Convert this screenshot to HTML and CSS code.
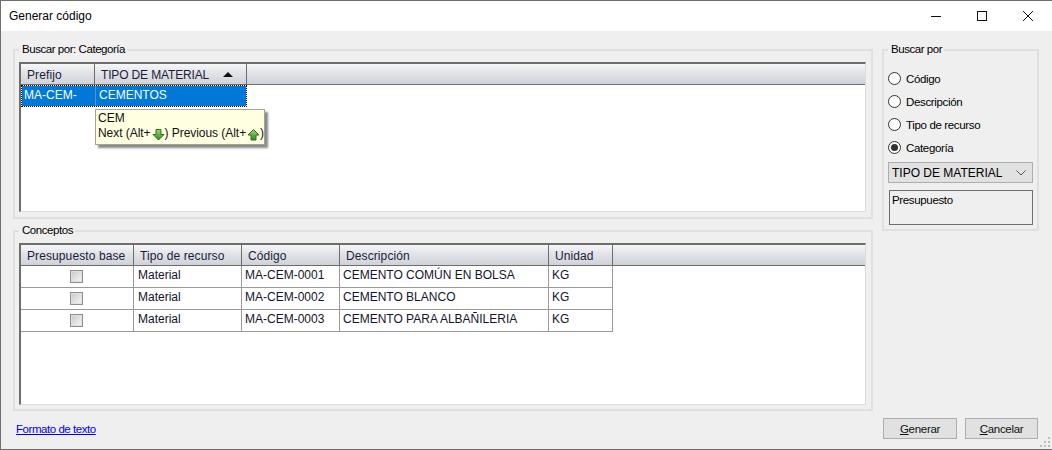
FILE: index.html
```html
<!DOCTYPE html>
<html lang="es">
<head>
<meta charset="utf-8">
<title>Generar código</title>
<link rel="stylesheet" href="styles.css">
</head>
<body>
<div class="window">
  <header class="titlebar">
    <span class="title">Generar código</span>
    <div class="controls">
      <svg class="ctl" width="46" height="30" viewBox="0 0 46 30"><path d="M18 15.500h10" stroke="#111" fill="none"/></svg>
      <svg class="ctl" width="46" height="30" viewBox="0 0 46 30"><rect x="18.500" y="10.500" width="9" height="9" stroke="#111" fill="none"/></svg>
      <svg class="ctl" width="46" height="30" viewBox="0 0 46 30"><path d="M18 10l10 10M28 10l-10 10" stroke="#111" fill="none"/></svg>
    </div>
  </header>
  <main class="content">
    <div class="left">
      <fieldset class="group group-top">
        <legend>Buscar por: Categoría</legend>
        <div class="grid grid-top">
          <div class="ghead">
            <div class="hcell w-prefijo">Prefijo</div>
            <div class="hcell w-tipo tight">TIPO DE MATERIAL<span class="sort"></span></div>
            <div class="hfill"></div>
          </div>
          <div class="selrow">
            <div class="selcell w-prefijo">MA-CEM-</div>
            <div class="selcell w-tipo">CEMENTOS</div>
          </div>
          <div class="tooltip">
            <div>CEM</div>
            <div class="tipline">Next (Alt+<svg width="13" height="13" viewBox="0 0 13 13"><defs><linearGradient id="gd" x1="0" y1="0" x2="0" y2="1"><stop offset="0" stop-color="#9fd67e"/><stop offset="1" stop-color="#2f8a1e"/></linearGradient></defs><path d="M4 1.500h5v5h3l-5.500 5.500L1 6.500h3z" fill="url(#gd)" stroke="#2f6f1c"/></svg>) Previous (Alt+<svg width="13" height="13" viewBox="0 0 13 13"><path d="M4 12h5V7h3L6.500 1.500 1 7h3z" fill="url(#gd)" stroke="#2f6f1c"/></svg>)</div>
          </div>
        </div>
      </fieldset>
      <fieldset class="group group-bottom">
        <legend>Conceptos</legend>
        <div class="grid grid-bottom">
          <div class="ghead">
            <div class="hcell c1">Presupuesto base</div>
            <div class="hcell c2">Tipo de recurso</div>
            <div class="hcell c3">Código</div>
            <div class="hcell c4">Descripción</div>
            <div class="hcell c5">Unidad</div>
            <div class="hfill"></div>
          </div>
          <div class="row">
            <div class="cell c1 center"><span class="check"></span></div>
            <div class="cell c2">Material</div>
            <div class="cell c3">MA-CEM-0001</div>
            <div class="cell c4">CEMENTO COMÚN EN BOLSA</div>
            <div class="cell c5">KG</div>
          </div>
          <div class="row">
            <div class="cell c1 center"><span class="check"></span></div>
            <div class="cell c2">Material</div>
            <div class="cell c3">MA-CEM-0002</div>
            <div class="cell c4">CEMENTO BLANCO</div>
            <div class="cell c5">KG</div>
          </div>
          <div class="row">
            <div class="cell c1 center"><span class="check"></span></div>
            <div class="cell c2">Material</div>
            <div class="cell c3">MA-CEM-0003</div>
            <div class="cell c4">CEMENTO PARA ALBAÑILERIA</div>
            <div class="cell c5">KG</div>
          </div>
        </div>
      </fieldset>
    </div>
    <aside class="right">
      <fieldset class="group group-side">
        <legend>Buscar por</legend>
        <label class="radio"><span class="dot"></span>Código</label>
        <label class="radio"><span class="dot"></span>Descripción</label>
        <label class="radio"><span class="dot"></span>Tipo de recurso</label>
        <label class="radio"><span class="dot on"></span>Categoría</label>
        <div class="combo">TIPO DE MATERIAL
          <svg width="10" height="6" viewBox="0 0 10 6"><path d="M.5.500l4.500 4.500 4.500-4.500" fill="none" stroke="#555"/></svg>
        </div>
        <div class="textbox">Presupuesto</div>
      </fieldset>
    </aside>
  </main>
  <footer class="footer">
    <a class="link" href="#">Formato de texto</a>
    <div class="buttons">
      <button class="btn btn-gen"><u>G</u>enerar</button>
      <button class="btn btn-can"><u>C</u>ancelar</button>
    </div>
    <svg class="grip" width="12" height="12" viewBox="0 0 12 12"><path d="M9 1h2v2H9zM5 5h2v2H5zM9 5h2v2H9zM1 9h2v2H1zM5 9h2v2H5zM9 9h2v2H9z" fill="#bdbdbd"/></svg>
  </footer>
</div>
</body>
</html>
```

FILE: styles.css
```css
* { box-sizing: border-box; }
html, body { margin: 0; padding: 0; }
body {
  width: 1052px;
  height: 450px;
  overflow: hidden;
  font-family: "Liberation Sans", Arial, sans-serif;
  font-size: 12px;
  color: #000;
}
.window {
  position: relative;
  width: 1052px;
  height: 450px;
  display: flex;
  flex-direction: column;
  background: #efefef;
  border-left: 1px solid #6e6e6e;
  border-top: 1px solid #6e6e6e;
  border-bottom: 1px solid #6e6e6e;
}
.titlebar {
  height: 30px;
  flex: none;
  background: #fff;
  display: flex;
  align-items: center;
  justify-content: space-between;
  padding-left: 8px;
}
.title { font-size: 12px; }
.controls { display: flex; padding-right: 1px; }
.content {
  flex: none;
  display: flex;
  padding: 12px 12px 0 12px;
  gap: 9px;
}
.left { width: 860px; display: flex; flex-direction: column; gap: 5px; }
.right { width: 157px; }
.group {
  margin: 0;
  border: 2px solid #e0e0e0;
  padding: 0;
  min-width: 0;
}
.group legend {
  margin-left: 0;
  padding: 0 2px 0 3px;
  font-size: 11.500px;
  letter-spacing: -.45px;
  line-height: 13px;
}
.group-top { height: 176px; padding: 6px 5px 5px 4px; }
.group-bottom { height: 187px; padding: 6px 5px 5px 4px; }
.group-side { height: 188px; padding: 11px 5px 0 4px; }

.grid {
  position: relative;
  background: #fff;
  border: 1px solid #6d6d6d;
  border-right-color: #dcdcdc;
  border-bottom-color: #dcdcdc;
  border-left-width: 2px;
  border-top-width: 2px;
}
.grid-top { height: 150px; }
.grid-bottom { height: 162px; }
.ghead {
  display: flex;
  height: 21px;
  border-bottom: 1px solid #6d6d6d;
  background: linear-gradient(#f6f7f9 0, #e3e5e9 40%, #cfd2d8 100%);
}
.hcell {
  display: flex;
  align-items: center;
  padding: 1px 0 0 6px;
  border-right: 1px solid #6d6d6d;
  letter-spacing: .1px;
  color: #1c1c3a;
  flex: none;
}
.hfill { flex: 1; }
.w-prefijo { width: 74px; }
.w-tipo { width: 152px; }
.tight { letter-spacing: -.15px; }
.sort {
  margin-left: 14px;
  width: 0;
  height: 0;
  border-left: 5px solid transparent;
  border-right: 5px solid transparent;
  border-bottom: 5px solid #111;
}
.selrow {
  display: flex;
  width: 226px;
  height: 22px;
  border: 1px dotted #000;
  background: linear-gradient(#0078d7, #0078d7) padding-box, #fff;
  color: #fff;
}
.selcell { padding: 2px 0 0 3px; line-height: 15px; flex: none; }
.selcell.w-prefijo { width: 74px; padding-left: 2px; border-right: 1px solid #5a8fc0; }
.tooltip {
  position: absolute;
  left: 74px;
  top: 45px;
  width: 170px;
  height: 36px;
  padding: 1px 2px;
  background: #ffffe1;
  border: 1px solid #a5a58d;
  box-shadow: 3px 3px 2px #8a8a8a;
  line-height: 15px;
  color: #111;
  z-index: 2;
}
.tipline { display: flex; align-items: center; white-space: pre; letter-spacing: -.05px; }
.tipline svg { flex: none; margin: 1px 0 0 1px; }
.row { display: flex; height: 22px; }
.cell {
  flex: none;
  padding: 2px 0 0 3px;
  border-right: 1px solid #9a9a9a;
  border-bottom: 1px solid #9a9a9a;
  line-height: 15px;
  color: #14142c;
}
.cell.c2 { padding-left: 4px; }
.center { display: flex; justify-content: center; padding: 4px 2px 0 0; }
.c1 { width: 113px; }
.c2 { width: 108px; }
.c3 { width: 98px; }
.c4 { width: 209px; }
.c5 { width: 64px; }
.check {
  width: 13px;
  height: 13px;
  border: 1px solid #8f8f8f;
  background: linear-gradient(135deg, #c6c8cc, #f8f8f8);
  box-shadow: inset 0 0 0 1px #dedede;
}
.radio {
  display: flex;
  align-items: center;
  height: 23px;
  gap: 5px;
  font-size: 11.500px;
  letter-spacing: -.35px;
}
.dot {
  flex: none;
  width: 13px;
  height: 13px;
  border: 1px solid #333;
  border-radius: 50%;
  background: #fff;
  display: flex;
  align-items: center;
  justify-content: center;
}
.dot.on::after {
  content: "";
  width: 7px;
  height: 7px;
  border-radius: 50%;
  background: #333;
}
.combo {
  margin-top: 3px;
  height: 21px;
  width: 145px;
  display: flex;
  align-items: center;
  justify-content: space-between;
  padding: 0 6px 0 3px;
  background: #e1e1e1;
  border: 1px solid #adadad;
}
.textbox {
  margin: 7px 0 0 1px;
  width: 144px;
  height: 35px;
  border: 1px solid #6d6d6d;
  padding: 3px 2px;
  font-size: 11.500px;
  letter-spacing: -.35px;
}
.footer {
  flex: 1;
  position: relative;
  display: flex;
  align-items: flex-start;
  justify-content: space-between;
  padding: 7px 14px 0 15px;
}
.link {
  color: #0000ff;
  font-size: 11.500px;
  letter-spacing: -.45px;
  margin-top: 5px;
  text-decoration: underline;
}
.buttons { display: flex; gap: 8px; }
.btn {
  width: 74px;
  height: 21px;
  padding: 0;
  font: 11.500px "Liberation Sans", Arial, sans-serif;
  letter-spacing: -.3px;
  background: #e1e1e1;
  border: 1px solid #adadad;
  color: #111;
}
.btn-can { width: 73px; }
.grip { position: absolute; right: 1px; bottom: 1px; }
```
